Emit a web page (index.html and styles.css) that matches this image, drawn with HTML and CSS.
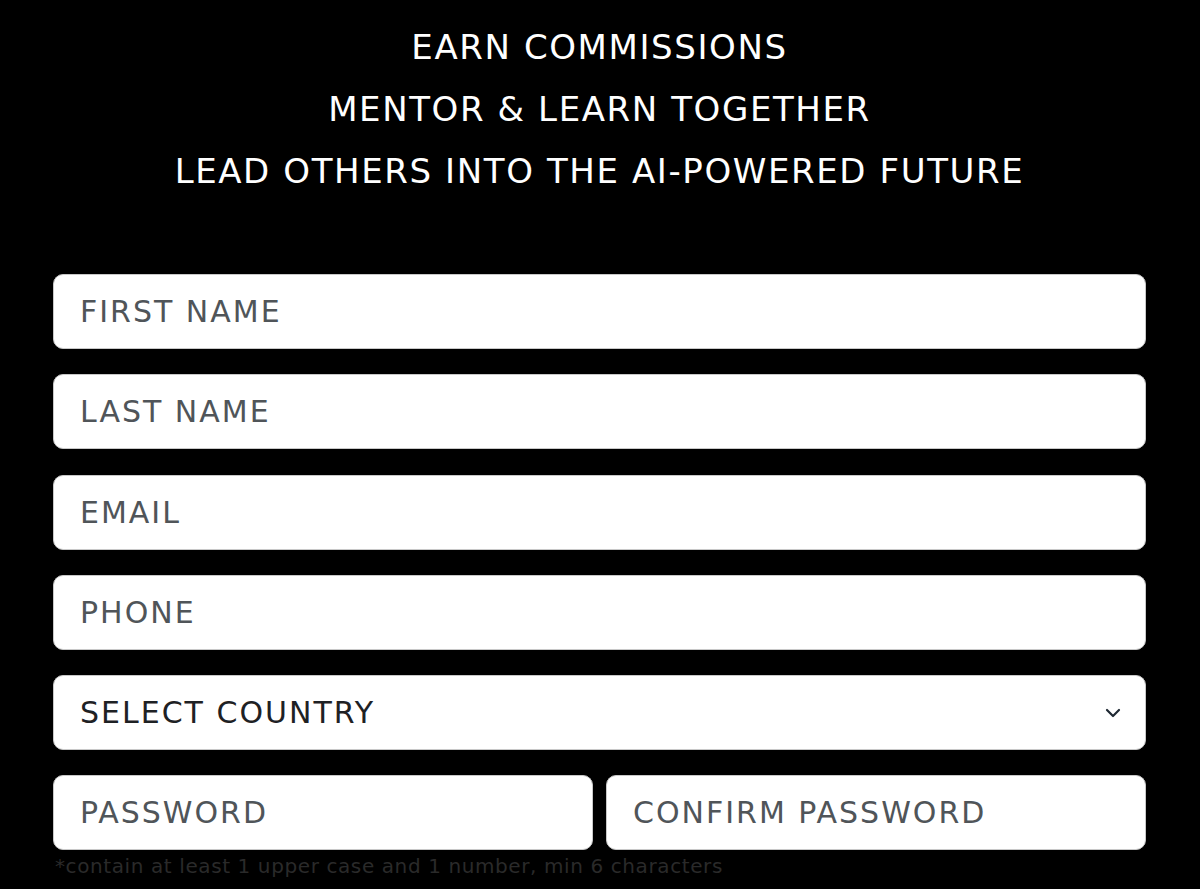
FILE: index.html
```html
<!DOCTYPE html>
<html>
<head>
<meta charset="utf-8">
<link rel="stylesheet" href="styles.css">
</head>
<body>
<div class="page">
  <div class="headlines">
    <div class="line">EARN COMMISSIONS</div>
    <div class="line">MENTOR &amp; LEARN TOGETHER</div>
    <div class="line">LEAD OTHERS INTO THE AI-POWERED FUTURE</div>
  </div>
  <form class="form">
    <input class="field" type="text" placeholder="FIRST NAME">
    <input class="field" type="text" placeholder="LAST NAME">
    <input class="field" type="email" placeholder="EMAIL">
    <input class="field" type="tel" placeholder="PHONE">
    <div class="field select">
      <span class="select-label">SELECT COUNTRY</span>
      <svg class="chevron" width="16" height="10" viewBox="0 0 16 10"><path d="M2 2 L8 8 L14 2" fill="none" stroke="#1f2933" stroke-width="2.2" stroke-linecap="round" stroke-linejoin="round"/></svg>
    </div>
    <div class="pair">
      <input class="field" type="password" placeholder="PASSWORD">
      <input class="field" type="password" placeholder="CONFIRM PASSWORD">
    </div>
    <div class="hint">*contain at least 1 upper case and 1 number, min 6 characters</div>
  </form>
</div>
</body>
</html>
```

FILE: styles.css
```css
html, body {
  margin: 0;
  padding: 0;
  background: #000;
}
.page {
  padding: 16px 54px 0 53px;
  font-family: "DejaVu Sans", sans-serif;
}
.headlines {
  text-align: center;
  color: #fff;
}
.line {
  font-size: 34px;
  line-height: 62px;
  font-weight: normal;
  letter-spacing: 1.6px;
}
.form {
  margin-top: 72px;
  display: flex;
  flex-direction: column;
  gap: 25.25px;
}
.field {
  box-sizing: border-box;
  height: 75px;
  width: 100%;
  background: #fff;
  border: 1px solid #c8c8c8;
  border-radius: 10px;
  padding: 0 26px;
  font-family: "DejaVu Sans", sans-serif;
  font-size: 30px;
  letter-spacing: 2px;
  color: #222;
  outline: none;
}
.field::placeholder {
  color: #505559;
}
.select {
  display: flex;
  align-items: center;
  justify-content: space-between;
  padding-right: 24px;
}
.select-label {
  color: #1e2124;
}
.pair {
  display: flex;
  gap: 13px;
}
.pair .field {
  flex: 1;
}
.hint {
  margin-top: -27px;
  margin-left: 2px;
  font-size: 20px;
  letter-spacing: 0.6px;
  color: #2a2a2a;
  line-height: 34px;
}
```
